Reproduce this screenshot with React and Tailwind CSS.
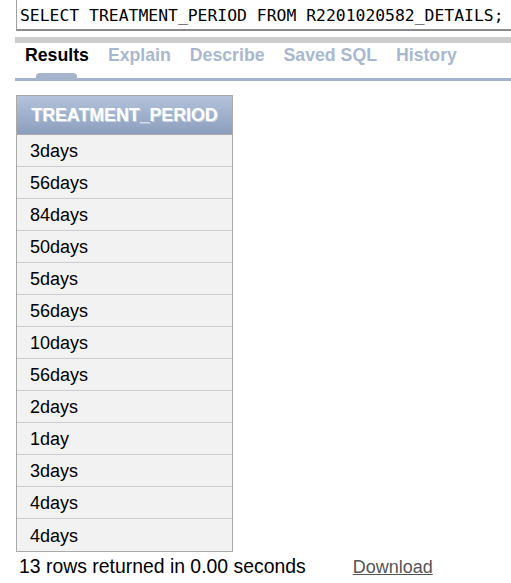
import React from 'react';

const rows = ['3days', '56days', '84days', '50days', '5days', '56days', '10days', '56days', '2days', '1day', '3days', '4days', '4days'];

const tabs = ['Results', 'Explain', 'Describe', 'Saved SQL', 'History'];

const App = () => {
    return (
        <div className="w-[511px] h-[583px] bg-white overflow-hidden" style={{ fontFamily: '"Liberation Sans", Arial, sans-serif' }}>
            {/* sql editor */}
            <div className="ml-[16px] h-[31px] border-l border-b-2 border-l-[#a0a0a0] border-b-[#8a8a8a] pl-[3px] pt-[4px]">
                <div className="text-[16.4px] leading-[24px] text-black whitespace-nowrap" style={{ fontFamily: '"DejaVu Sans Mono", monospace' }}>
                    SELECT TREATMENT_PERIOD FROM R2201020582_DETAILS;
                </div>
            </div>

            <div className="ml-[15px] mt-[6px] h-[6px] bg-[#cccccc]"></div>

            {/* tabs */}
            <div className="ml-[15px] border-b-[3px] border-[#a6b5cd]">
                <div className="flex gap-[19px] pl-[10px] h-[35px] items-start pt-[1px]">
                    {tabs.map((t, i) => (
                        <div key={t} className="relative h-full">
                            <span className={`text-[17.7px] font-bold leading-[22px] ${i === 0 ? 'text-black' : 'text-[#a9b8d0]'}`}>{t}</span>
                            {i === 0 && <div className="absolute left-[11px] bottom-0 w-[41px] h-[5px] rounded-t-[4px] bg-[#a6b5cd]"></div>}
                        </div>
                    ))}
                </div>
            </div>

            {/* results table */}
            <div className="ml-[16px] mt-[14px] w-[217px] border border-[#aaaaaa]">
                <div className="h-[39px] flex items-center justify-center bg-gradient-to-b from-[#b5c3db] to-[#8b9ebd] border-b border-[#aaaaaa]">
                    <span className="text-white font-bold text-[17.8px]" style={{ textShadow: '1px 1px 0 #c8d4ea' }}>TREATMENT_PERIOD</span>
                </div>
                {rows.map((r, i) => (
                    <div key={i} className={`h-[32px] flex items-center pl-[13px] pt-[2px] bg-[#f2f2f2] text-[18px] text-black ${i < rows.length - 1 ? 'border-b border-[#cccccc]' : ''}`}>
                        {r}
                    </div>
                ))}
            </div>

            <div className="flex items-center mt-[2px] ml-[19px] h-[26px]">
                <span className="text-black text-[19.4px]">13 rows returned in 0.00 seconds</span>
                <a href="#" className="ml-[47px] text-[18px] text-[#555555] underline">Download</a>
            </div>
        </div>
    );
};

export default App;
